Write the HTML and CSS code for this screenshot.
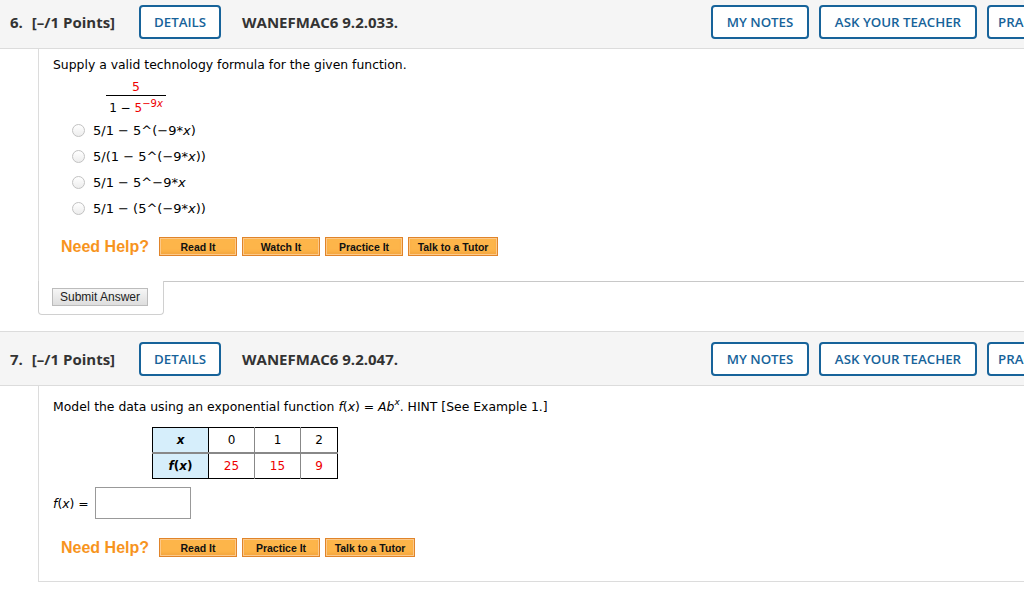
FILE: index.html
```html
<!DOCTYPE html>
<html lang="en">
<head>
    <meta charset="UTF-8">
    <title>Questions</title>
    <link rel="stylesheet" href="styles.css">
</head>
<body>
    <div class="page">

        <!-- question 6 -->
        <div class="question first">
            <div class="q-head">
                <span class="q-num">6.</span>
                <span class="q-points">[&ndash;/1 Points]</span>
                <button class="btn-outline details">DETAILS</button>
                <span class="q-title">WANEFMAC6 9.2.033.</span>
                <div class="q-tools">
                    <button class="btn-outline notes">MY NOTES</button>
                    <button class="btn-outline ask">ASK YOUR TEACHER</button>
                    <button class="btn-outline another">PRACTICE ANOTHER</button>
                </div>
            </div>
            <div class="q-body">
                <p class="prompt">Supply a valid technology formula for the given function.</p>
                <div class="fraction">
                    <span class="num red">5</span>
                    <span class="den">1 &minus; <span class="red">5<sup>&minus;9<i>x</i></sup></span></span>
                </div>
                <ul class="choices">
                    <li><span class="radio"></span>5/1 &minus; 5^(&minus;9*<i>x</i>)</li>
                    <li><span class="radio"></span>5/(1 &minus; 5^(&minus;9*<i>x</i>))</li>
                    <li><span class="radio"></span>5/1 &minus; 5^&minus;9*<i>x</i></li>
                    <li><span class="radio"></span>5/1 &minus; (5^(&minus;9*<i>x</i>))</li>
                </ul>
                <div class="help">
                    <span class="help-label">Need Help?</span>
                    <button class="help-btn">Read It</button>
                    <button class="help-btn">Watch It</button>
                    <button class="help-btn">Practice It</button>
                    <button class="help-btn wide">Talk to a Tutor</button>
                </div>
            </div>
            <div class="q-foot">
                <div class="submit-tab">
                    <button class="submit">Submit Answer</button>
                </div>
                <div class="foot-rest"></div>
            </div>
        </div>

        <!-- question 7 -->
        <div class="question">
            <div class="q-head">
                <span class="q-num">7.</span>
                <span class="q-points">[&ndash;/1 Points]</span>
                <button class="btn-outline details">DETAILS</button>
                <span class="q-title">WANEFMAC6 9.2.047.</span>
                <div class="q-tools">
                    <button class="btn-outline notes">MY NOTES</button>
                    <button class="btn-outline ask">ASK YOUR TEACHER</button>
                    <button class="btn-outline another">PRACTICE ANOTHER</button>
                </div>
            </div>
            <div class="q-body last">
                <p class="prompt">Model the data using an exponential function <i>f</i>(<i>x</i>) = <i>Ab</i><sup class="sup-x"><i>x</i></sup>. HINT [See Example 1.]</p>
                <table class="data">
                    <tr class="top-row">
                        <th><i>x</i></th>
                        <td>0</td>
                        <td>1</td>
                        <td class="end">2</td>
                    </tr>
                    <tr class="bottom-row">
                        <th><i>f</i>(<i>x</i>)</th>
                        <td class="red">25</td>
                        <td class="red">15</td>
                        <td class="red end">9</td>
                    </tr>
                </table>
                <div class="answer">
                    <span class="answer-label"><i>f</i>(<i>x</i>) =</span>
                    <span class="answer-box"></span>
                </div>
                <div class="help">
                    <span class="help-label">Need Help?</span>
                    <button class="help-btn">Read It</button>
                    <button class="help-btn">Practice It</button>
                    <button class="help-btn wide">Talk to a Tutor</button>
                </div>
            </div>
        </div>

    </div>
</body>
</html>
```

FILE: styles.css
```css
*{
    padding:0;
    margin:0;
    box-sizing:border-box;
}
html, body{
    overflow:hidden;
    background:#fff;
}
.page{
    width:1147px;
    margin-top:-6px;
    font-family:"DejaVu Sans", Verdana, sans-serif;
    font-size:12.4px;
    color:#000;
}
.red{
    color:#e00;
}

/* header bar */
.q-head{
    display:flex;
    align-items:center;
    height:55px;
    padding-left:10px;
    background:#f5f5f5;
    border-top:1px solid #dcdcdc;
    border-bottom:1px solid #dcdcdc;
    font-family:"Open Sans", sans-serif;
    font-weight:700;
    font-size:15px;
    color:#333;
    white-space:nowrap;
}
.q-points{
    margin-left:9px;
}
.q-title{
    margin-left:21px;
}
.btn-outline{
    height:34px;
    padding:0;
    border:2px solid #17639a;
    border-radius:4px;
    background:#fff;
    color:#17639a;
    font-family:"Open Sans", sans-serif;
    font-weight:600;
    font-size:13.3px;
    white-space:nowrap;
}
.details{
    margin-left:24px;
    width:82px;
}
.notes{
    width:98px;
}
.ask{
    width:158px;
}
.another{
    width:150px;
}
.q-tools{
    display:flex;
    gap:10px;
    margin-left:auto;
    padding-right:10px;
}

/* question body */
.q-body{
    margin-left:38px;
    border-left:1px solid #dcdcdc;
    padding:9px 0 25px 14px;
}
.q-body.last{
    border-bottom:1px solid #dcdcdc;
    padding-top:14px;
    padding-bottom:24px;
}
.prompt{
    line-height:14px;
}
.prompt sup{
    font-size:9px;
    vertical-align:6px;
    line-height:0;
}

.fraction{
    display:inline-flex;
    flex-direction:column;
    align-items:center;
    margin:8px 0 0 53px;
    width:60px;
}
.fraction .num{
    display:block;
    width:100%;
    text-align:center;
    line-height:14px;
    border-bottom:1px solid #000;
    padding-bottom:1px;
}
.fraction .den{
    display:block;
    padding-top:5px;
    line-height:14px;
    font-size:12px;
}
.fraction sup{
    font-size:10px;
    vertical-align:5px;
    line-height:0;
}

.choices{
    list-style:none;
    margin-top:2px;
    font-size:13px;
}
.choices li{
    display:flex;
    align-items:center;
    height:26px;
    padding-left:19px;
}
.radio{
    width:13px;
    height:13px;
    border:1px solid #c2c2c2;
    border-radius:50%;
    background:linear-gradient(#fff, #ededed);
    margin-right:8px;
}

/* need help row */
.help{
    display:flex;
    align-items:center;
    gap:5px;
    margin-top:16px;
    padding-left:8px;
}
.help-label{
    font-family:"Liberation Sans", Arial, sans-serif;
    font-weight:700;
    font-size:16px;
    color:#f7941e;
    margin-right:5px;
}
.help-btn{
    width:78px;
    height:19px;
    border:1px solid #e0842a;
    box-shadow:inset 0 0 0 1px #fcc98a, inset 0 -3px 3px rgba(230,140,40,0.35);
    background:#fdb54a;
    font-family:"Liberation Sans", Arial, sans-serif;
    font-weight:700;
    font-size:10.5px;
    color:#111;
}
.help-btn.wide{
    width:90px;
}

/* submit tab */
.q-foot{
    display:flex;
    margin-left:38px;
    height:34px;
    margin-bottom:16px;
}
.submit-tab{
    width:126px;
    border:1px solid #d0d0d0;
    border-top:none;
    border-radius:0 0 4px 4px;
    padding:7px 0 0 13px;
}
.foot-rest{
    flex:1;
    border-top:1px solid #c8c8c8;
}
.submit{
    width:96px;
    height:18px;
    border:1px solid #bcbcbc;
    background:linear-gradient(#f6f6f6, #dedede);
    font-family:"Liberation Sans", Arial, sans-serif;
    font-size:12px;
    color:#222;
}

/* data table */
.data{
    border-collapse:collapse;
    margin:13px 0 0 99px;
    border:1px solid #000;
}
.data th, .data td{
    height:25px;
    text-align:center;
    font-size:12px;
}
.data .bottom-row th, .data .bottom-row td{
    height:26px;
}
.data th{
    width:56px;
    background:#d6eefb;
    border-right:1px solid #000;
    font-weight:700;
}
.data td{
    width:46px;
    border-right:1px solid #888;
}
.data td.end{
    width:37px;
    border-right:1px solid #000;
}
.data .top-row th, .data .top-row td{
    border-bottom:2px solid #888;
}

.answer{
    display:flex;
    align-items:center;
    margin-top:8px;
}
.answer-label{
    margin-right:6px;
}
.answer-box{
    width:96px;
    height:32px;
    border:1px solid #999;
    background:#fff;
}
.q-body.last .help{
    margin-top:19px;
}
```
